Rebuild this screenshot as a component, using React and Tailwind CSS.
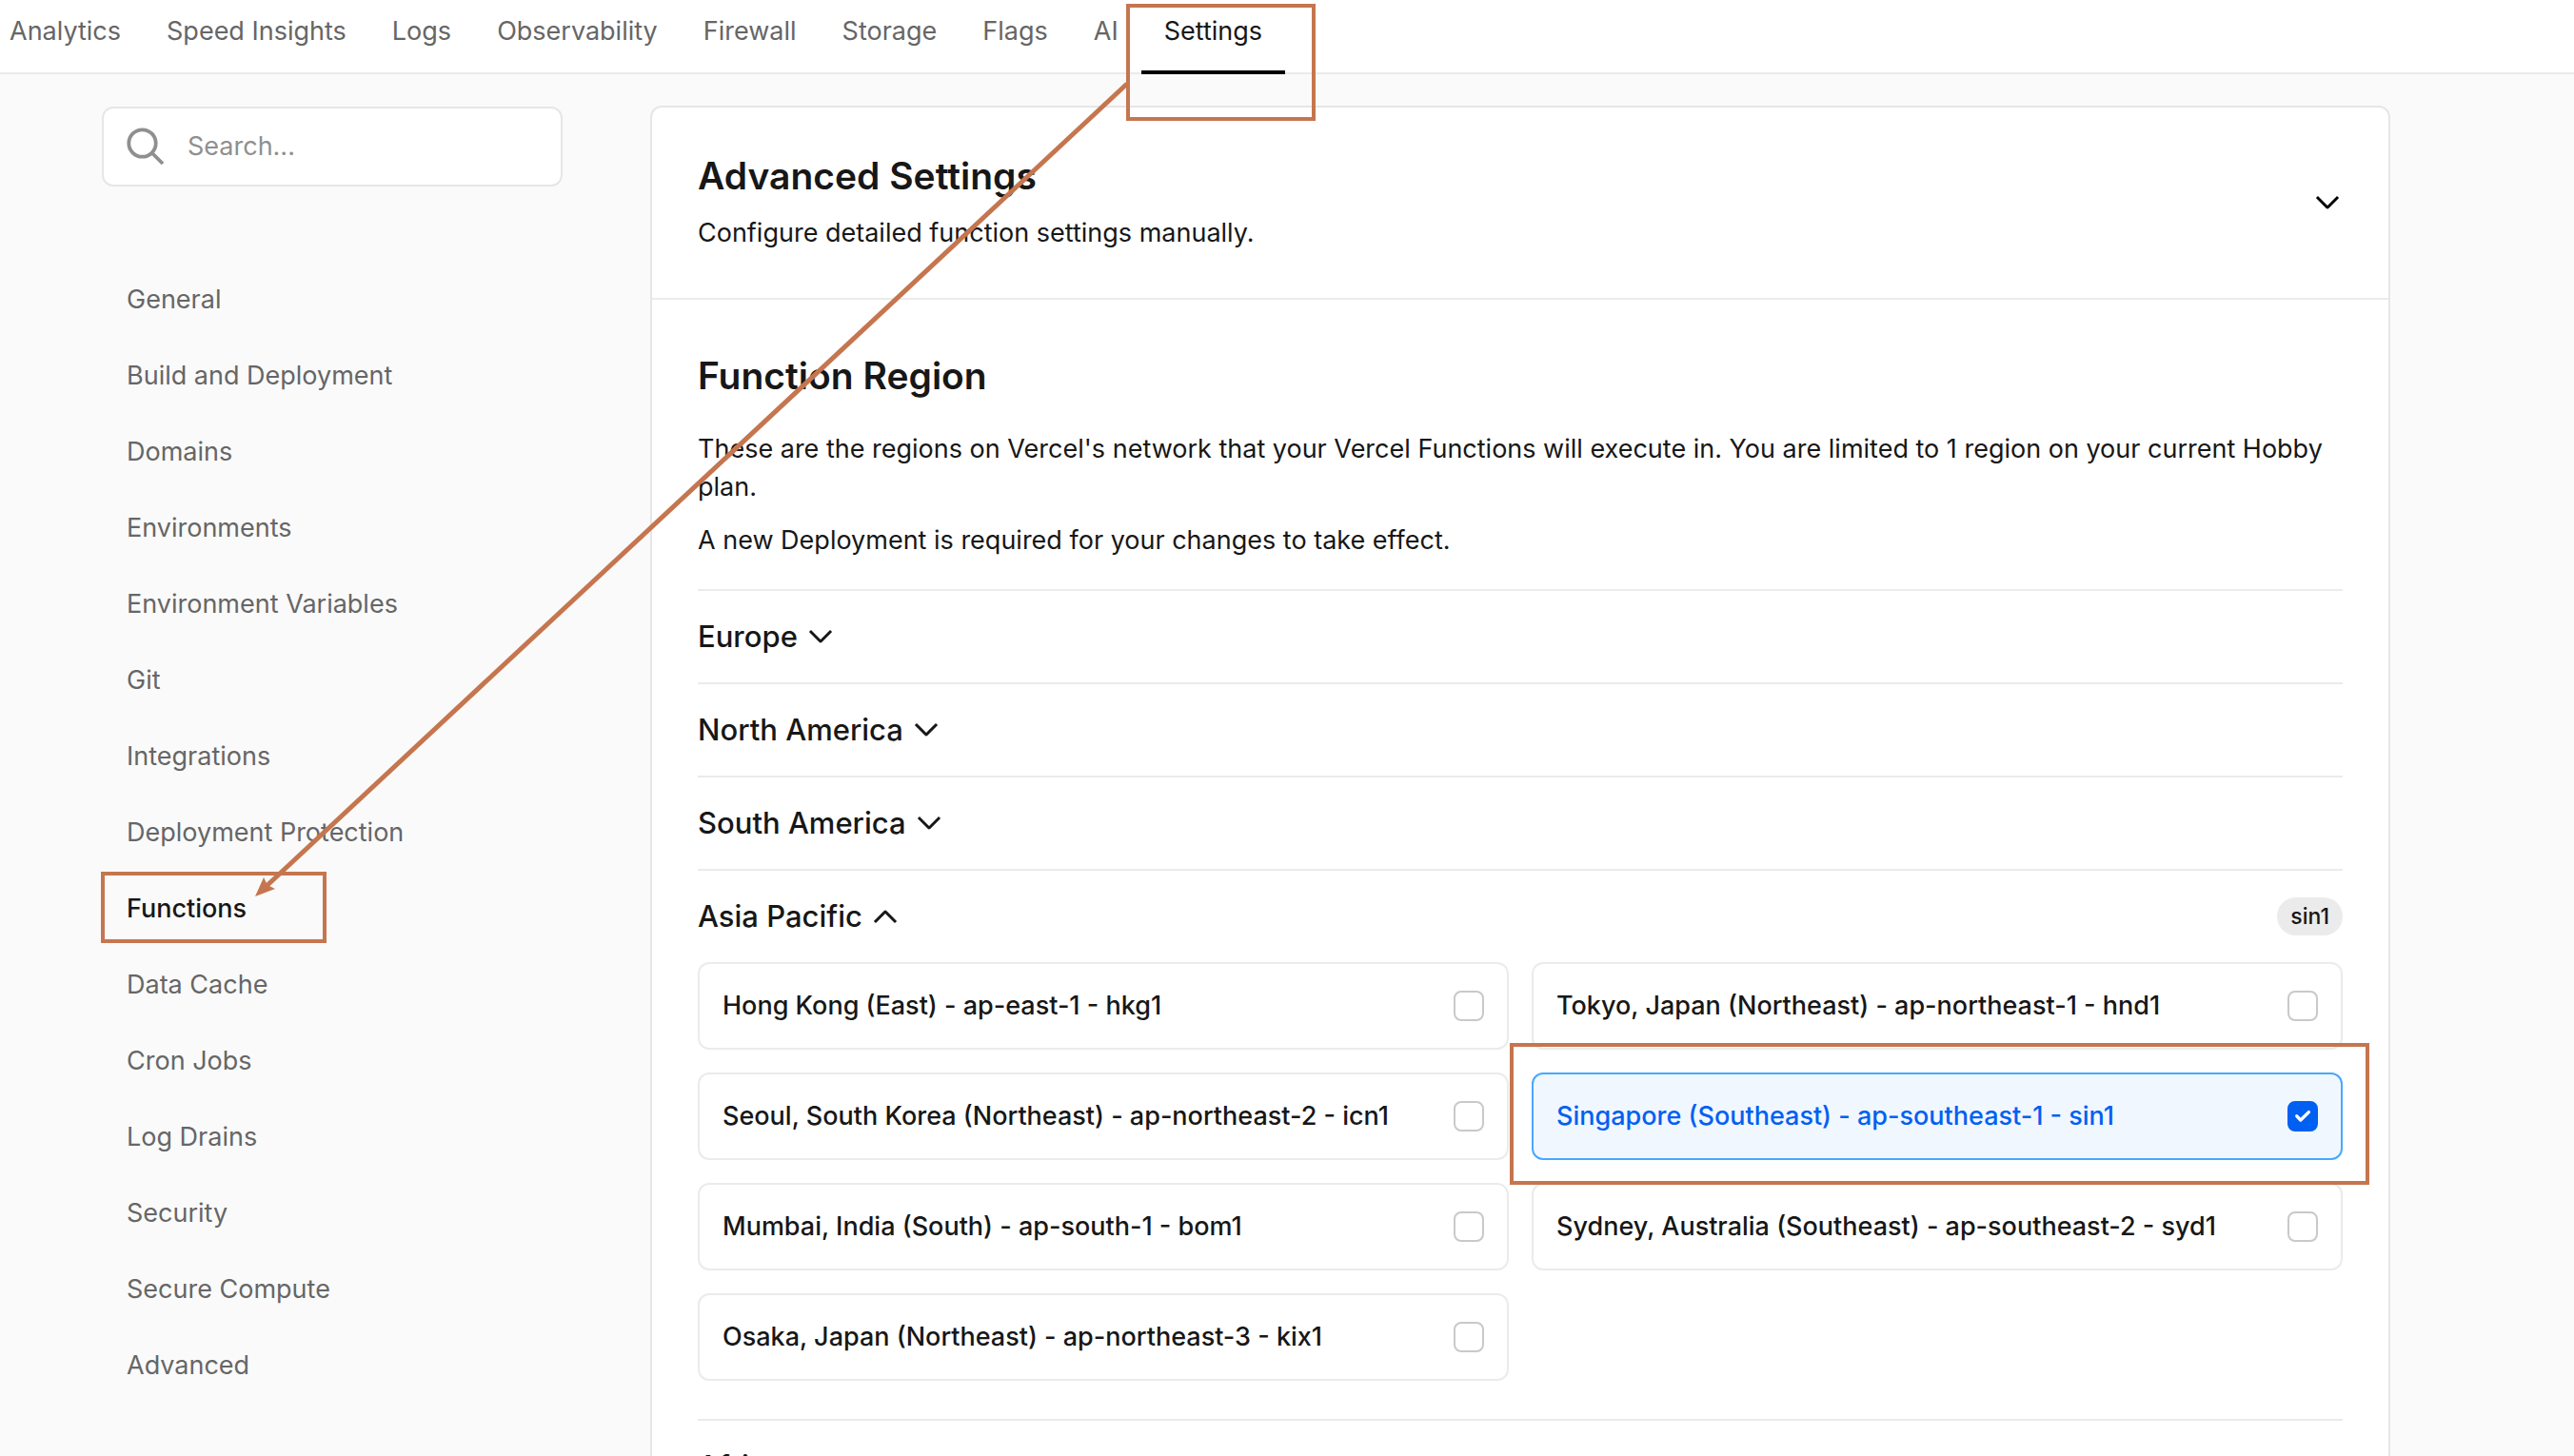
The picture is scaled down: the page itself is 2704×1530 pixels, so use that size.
const TABS = ["Analytics", "Speed Insights", "Logs", "Observability", "Firewall", "Storage", "Flags", "AI", "Settings"];

const SECTIONS = [
  "General",
  "Build and Deployment",
  "Domains",
  "Environments",
  "Environment Variables",
  "Git",
  "Integrations",
  "Deployment Protection",
  "Functions",
  "Data Cache",
  "Cron Jobs",
  "Log Drains",
  "Security",
  "Secure Compute",
  "Advanced",
];

const REGIONS = [
  "Hong Kong (East) - ap-east-1 - hkg1",
  "Tokyo, Japan (Northeast) - ap-northeast-1 - hnd1",
  "Seoul, South Korea (Northeast) - ap-northeast-2 - icn1",
  "Singapore (Southeast) - ap-southeast-1 - sin1",
  "Mumbai, India (South) - ap-south-1 - bom1",
  "Sydney, Australia (Southeast) - ap-southeast-2 - syd1",
  "Osaka, Japan (Northeast) - ap-northeast-3 - kix1",
];

const SELECTED = REGIONS[3];

function Chevron({ up = false }) {
  return (
    <svg viewBox="0 0 16 16" fill="currentColor" aria-hidden="true" className={up ? "size-8 shrink-0 rotate-180" : "size-8 shrink-0"}>
      <path d="M14.06 5.5 8.71 10.85a1 1 0 0 1-1.42 0L1.94 5.5 3 4.44l5 5 5-5z" />
    </svg>
  );
}

function SearchIcon() {
  return (
    <svg viewBox="0 0 40 40" fill="none" stroke="currentColor" strokeWidth="3.8" aria-hidden="true" className="size-10 shrink-0 text-[#8f8f8f]">
      <circle cx="16.5" cy="16.5" r="14.2" />
      <path d="M26.5 26.5 38 38" />
    </svg>
  );
}

function TopNav() {
  return (
    <header className="border-b-2 border-[#ebebeb] bg-white">
      <nav aria-label="Project" className="flex gap-12 pl-[10px]">
        {TABS.map((tab) => {
          const active = tab === "Settings";
          return (
            <a
              key={tab}
              href="#"
              aria-current={active ? "page" : undefined}
              className={`relative whitespace-nowrap pt-[13px] pb-[23px] text-[27px] leading-10 ${active ? "text-[#171717]" : "text-[#666666]"}`}
            >
              {tab}
              {active && (
                <>
                  <span className="absolute -inset-x-6 -bottom-0.5 h-1 bg-black" />
                  <span className="absolute top-1 -right-14 -bottom-[51px] -left-10 z-10 border-4 border-[#c5764f]" />
                </>
              )}
            </a>
          );
        })}
      </nav>
    </header>
  );
}

function Sidebar() {
  return (
    <aside className="w-[484px] shrink-0 pt-px">
      <label className="flex h-[84px] items-center gap-6 rounded-xl border-2 border-[#e6e6e6] bg-white px-6 text-[27px]">
        <SearchIcon />
        <input
          type="search"
          aria-label="Search settings"
          placeholder="Search..."
          className="min-w-0 flex-1 bg-transparent leading-10 text-[#171717] outline-none placeholder:text-[#8f8f8f]"
        />
      </label>
      <nav aria-label="Settings" className="mt-[83px] flex flex-col gap-2">
        {SECTIONS.map((name) => {
          const active = name === "Functions";
          return (
            <a
              key={name}
              href="#"
              aria-current={active ? "page" : undefined}
              className={`relative px-[26px] py-4 text-[27px] leading-10 ${active ? "font-medium text-[#171717]" : "text-[#666666]"}`}
            >
              {name}
              {active && <span className="absolute -top-[3px] -left-px h-[75px] w-[237px] border-4 border-[#c5764f]" />}
            </a>
          );
        })}
      </nav>
    </aside>
  );
}

function Region({ name }) {
  const selected = name === SELECTED;
  return (
    <div className="relative">
      <label
        className={`flex items-center justify-between rounded-xl border-2 px-6 py-6 text-[27px] leading-10 font-medium ${
          selected ? "border-[#47a8ff] bg-[#f0f7ff] text-[#0060f1]" : "border-[#ebebeb] bg-white text-[#171717]"
        }`}
      >
        <span>{name}</span>
        <span className="grid place-items-center">
          <input
            type="checkbox"
            defaultChecked={selected}
            className="col-start-1 row-start-1 size-8 appearance-none rounded-lg border-2 border-[#c9c9c9] bg-white checked:border-[#0060f1] checked:bg-[#0060f1]"
          />
          {selected && (
            <svg viewBox="0 0 32 32" fill="none" stroke="white" strokeWidth="3.4" strokeLinecap="round" strokeLinejoin="round" aria-hidden="true" className="pointer-events-none z-10 col-start-1 row-start-1 size-8">
              <path d="m9.8 15.8 4 4.2 8.6-8.4" />
            </svg>
          )}
        </span>
      </label>
      {selected && (
        <span className="pointer-events-none absolute -top-[31px] -right-7 -bottom-[26px] -left-[23px] z-10 border-4 border-[#c5764f]" />
      )}
    </div>
  );
}

function Group({ name, open = false, badge, children }) {
  return (
    <section className="border-t-2 border-[#ebebeb]">
      <div className="flex h-24 items-center justify-between">
        <button type="button" aria-expanded={open} className="flex items-center gap-2 text-[31px] leading-10 font-medium">
          {name}
          <Chevron up={open} />
        </button>
        {badge && <span className="rounded-full bg-[#ebebeb] px-[14px] text-[23px] leading-10 font-medium">{badge}</span>}
      </div>
      {children}
    </section>
  );
}

function Arrow() {
  return (
    <svg width="1200" height="960" viewBox="0 0 1200 960" aria-hidden="true" className="pointer-events-none absolute top-0 left-0 z-20">
      <path d="M1184 88 280 931" stroke="#c5764f" strokeWidth="5" />
      <path d="m268 942 9-20 4 8 8 4z" fill="#c5764f" />
    </svg>
  );
}

export default function App() {
  return (
    <div className="relative h-screen overflow-hidden bg-[#fafafa] font-['Inter',sans-serif] text-[#171717]">
      <TopNav />
      <div className="flex gap-[92px] pt-[33px] pr-[193px] pl-[107px]">
        <Sidebar />
        <main className="min-w-0 flex-1 rounded-xl border-2 border-[#e6e6e6] bg-white">
          <section className="flex items-center justify-between border-b-2 border-[#ebebeb] p-12">
            <div>
              <h2 className="text-[39px] leading-[48px] font-semibold">Advanced Settings</h2>
              <p className="mt-4 text-[27px] leading-10">Configure detailed function settings manually.</p>
            </div>
            <button type="button" aria-label="Expand advanced settings" className="text-black">
              <Chevron />
            </button>
          </section>
          <section className="px-12 pt-14">
            <h2 className="text-[39px] leading-[48px] font-semibold">Function Region</h2>
            <p className="mt-[33px] text-[27px] leading-10">
              These are the regions on Vercel's network that your Vercel Functions will execute in. You are limited to 1 region on your current Hobby plan.
            </p>
            <p className="mt-4 mb-[31px] text-[27px] leading-10">A new Deployment is required for your changes to take effect.</p>
            <Group name="Europe" />
            <Group name="North America" />
            <Group name="South America" />
            <Group name="Asia Pacific" open badge="sin1">
              <div className="grid grid-cols-2 gap-6 pb-10">
                {REGIONS.map((name) => (
                  <Region key={name} name={name} />
                ))}
              </div>
            </Group>
            <Group name="Africa" />
          </section>
        </main>
      </div>
      <Arrow />
    </div>
  );
}
